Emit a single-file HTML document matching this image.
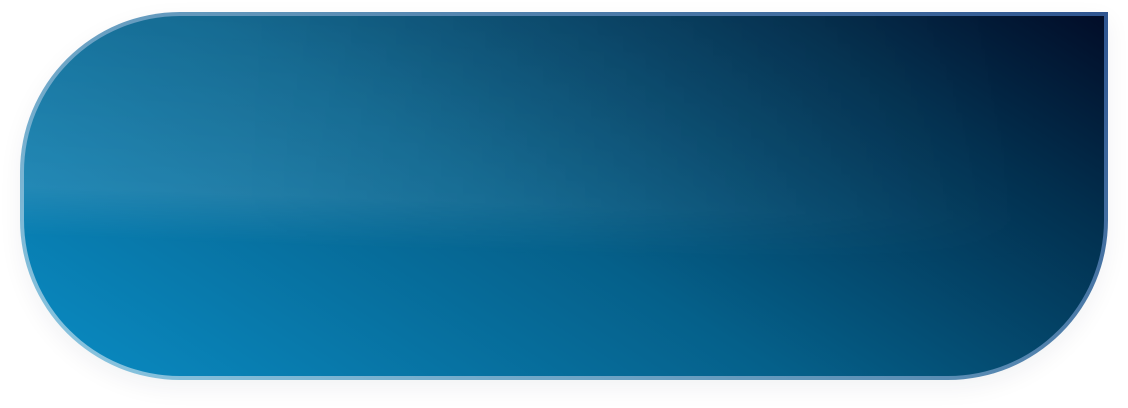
<!DOCTYPE html>
<html>
<head>
<meta charset="utf-8">
<style>
html,body{margin:0;padding:0;width:1128px;height:408px;background:#fff;overflow:hidden}
.box{
  position:absolute;left:20px;top:12px;width:1088px;height:368px;box-sizing:border-box;
  border:4px solid transparent;
  border-radius:160px 0 160px 160px;
  background:
    linear-gradient(32deg,#0a8cc4 0%,#05608a 46%,#022f4e 80%,#020d28 100%) padding-box,
    linear-gradient(32deg,#8cc9e3 0%,#5f93b8 50%,#2f5590 100%) border-box;
  box-shadow:0 8px 24px rgba(15,30,70,.06);
  overflow:hidden;
}
.gloss{
  position:absolute;left:-4px;right:-4px;top:-4px;height:290px;
  background:linear-gradient(182deg,rgba(255,255,255,.06) 0,rgba(255,255,255,.11) 212px,rgba(255,255,255,0) 262px);
  -webkit-mask-image:linear-gradient(90deg,#000 0%,#000 20%,rgba(0,0,0,.4) 65%,rgba(0,0,0,0) 95%);
  mask-image:linear-gradient(90deg,#000 0%,#000 20%,rgba(0,0,0,.4) 65%,rgba(0,0,0,0) 95%);
}
</style>
</head>
<body>
<div class="box"><div class="gloss"></div></div>
</body>
</html>
